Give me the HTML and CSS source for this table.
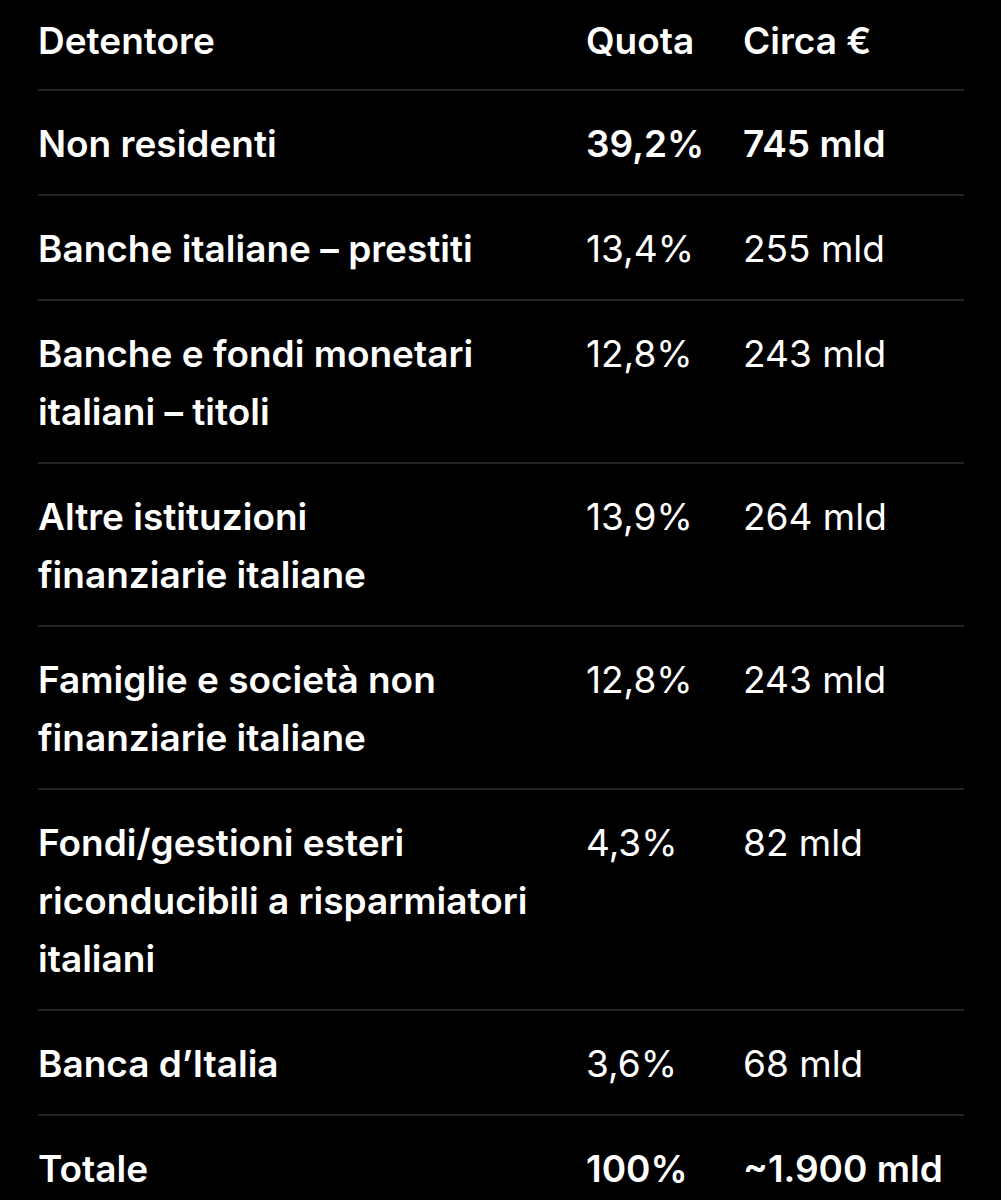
FILE: index.html
```html
<!DOCTYPE html>
<html lang="it">
<head>
<meta charset="utf-8">
<title>Detentori del debito</title>
<link rel="stylesheet" href="styles.css">
</head>
<body>
<div class="table">
  <div class="row head">
    <div class="cell label">Detentore</div>
    <div class="cell strong">Quota</div>
    <div class="cell strong">Circa €</div>
  </div>
  <div class="row">
    <div class="cell label">Non residenti</div>
    <div class="cell strong">39,2%</div>
    <div class="cell strong">745 mld</div>
  </div>
  <div class="row">
    <div class="cell label">Banche italiane – prestiti</div>
    <div class="cell">13,4%</div>
    <div class="cell">255 mld</div>
  </div>
  <div class="row">
    <div class="cell label">Banche e fondi monetari italiani – titoli</div>
    <div class="cell">12,8%</div>
    <div class="cell">243 mld</div>
  </div>
  <div class="row">
    <div class="cell label">Altre istituzioni<br>finanziarie italiane</div>
    <div class="cell">13,9%</div>
    <div class="cell">264 mld</div>
  </div>
  <div class="row">
    <div class="cell label">Famiglie e società non finanziarie italiane</div>
    <div class="cell">12,8%</div>
    <div class="cell">243 mld</div>
  </div>
  <div class="row">
    <div class="cell label">Fondi/gestioni esteri riconducibili a risparmiatori italiani</div>
    <div class="cell">4,3%</div>
    <div class="cell">82 mld</div>
  </div>
  <div class="row">
    <div class="cell label">Banca d’Italia</div>
    <div class="cell">3,6%</div>
    <div class="cell">68 mld</div>
  </div>
  <div class="row last">
    <div class="cell label">Totale</div>
    <div class="cell strong">100%</div>
    <div class="cell strong">~1.900 mld</div>
  </div>
</div>
</body>
</html>
```

FILE: styles.css
```css
html, body {
  margin: 0;
  padding: 0;
  background: #000;
}

body {
  color: #fff;
  font-family: Inter, "Noto Sans", "Liberation Sans", sans-serif;
  font-size: 37px;
  line-height: 58px;
  -webkit-font-smoothing: antialiased;
}

.table {
  width: 926px;
  margin-left: 38px;
  padding-top: 12px;
}

.row {
  display: grid;
  grid-template-columns: 548px 157px 1fr;
  padding: 24px 0 21px;
  border-bottom: 2px solid #232323;
}

.row.head {
  padding-top: 0;
  padding-bottom: 19px;
}

.row.last {
  border-bottom: none;
}

.cell {
  font-weight: 400;
}

.cell.label {
  font-weight: 600;
  padding-right: 30px;
}

.cell.strong {
  font-weight: 600;
}
```
